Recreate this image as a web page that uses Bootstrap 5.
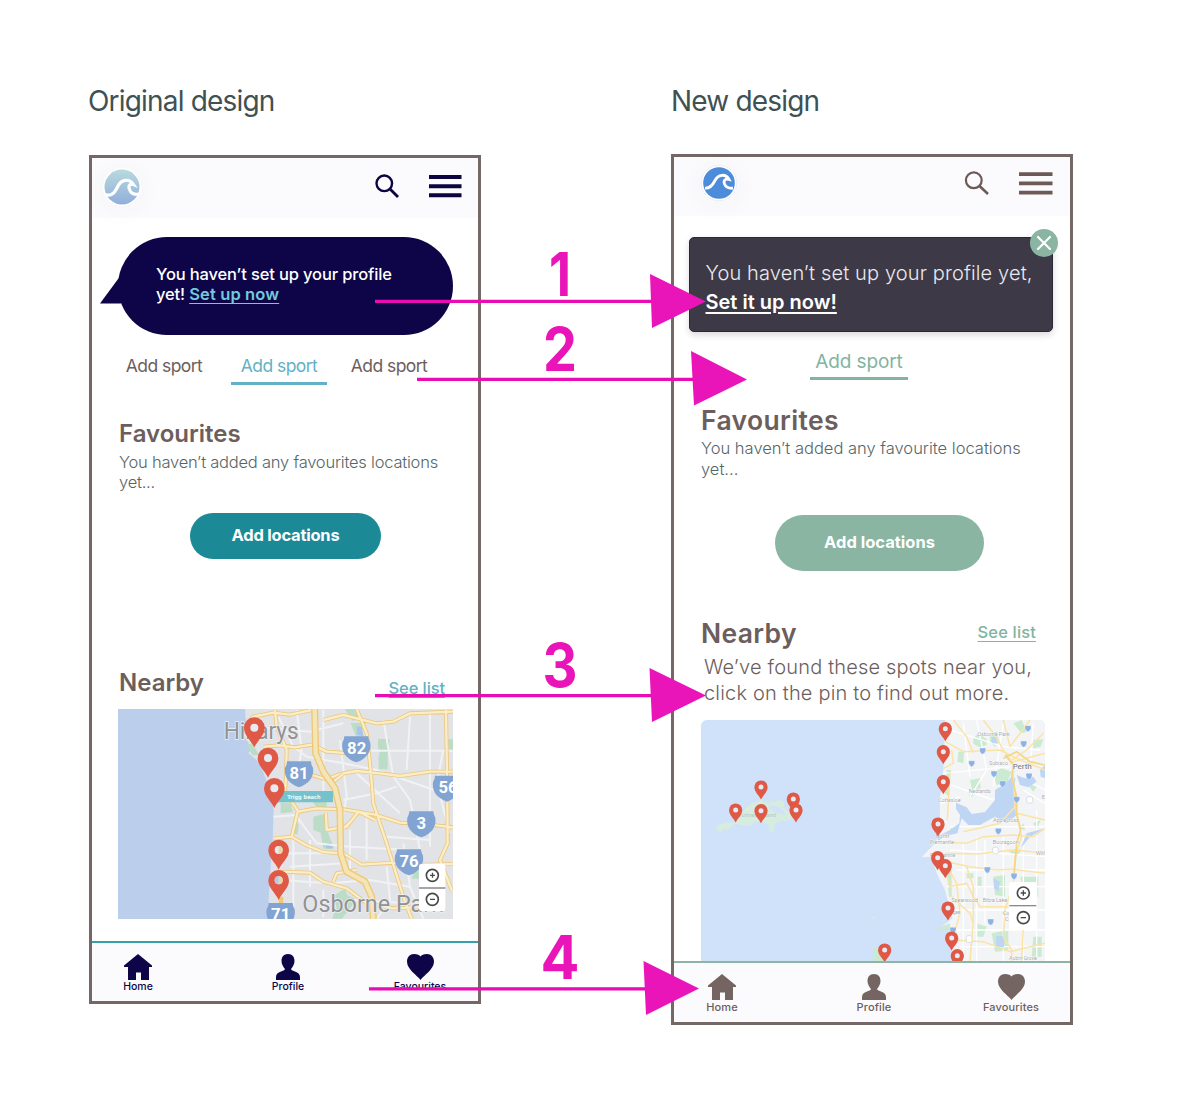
<!DOCTYPE html>
<html lang="en">
<head>
<meta charset="utf-8">
<meta name="viewport" content="width=device-width, initial-scale=1">
<title>Original and new design</title>
<link rel="stylesheet" href="https://cdn.jsdelivr.net/npm/bootstrap@5.3.0/dist/css/bootstrap.min.css">
<style>
body{font-family:Inter,"Liberation Sans",sans-serif;background:#fff;color:#6c5e5c}
.board{width:1200px;height:1093px;overflow:hidden}
.col-old{width:392px;margin-left:89px;padding-top:82px}
.col-new{width:402px;margin-left:190px;padding-top:82px}
.board-title{font-size:28px;line-height:38px;font-weight:400;color:#3f5153;letter-spacing:-.82px;margin:0 0 0 -1px;white-space:nowrap}
.phone{border:3px solid #746765;background:#fff}
.col-old .phone{height:849px;margin-top:35px}
.col-new .phone{height:871px;margin-top:34px}
.topbar{background:#fbfafd}
.col-old .topbar{height:60px;padding:0 16px 3px 11px}
.col-new .topbar{height:59px;padding:0 17px 7px 26px}
.phone svg{display:block;flex:none}
.logo-halo{border-radius:50%;box-shadow:0 4px 28px rgba(60,60,80,.045)}
.bubble{background:#0e0549;color:#fff;width:335px;height:98px;margin:19px 0 0 26px;border-radius:49px;padding:27px 0 0 38px;font-size:16.5px;line-height:20px;font-weight:500;white-space:nowrap;letter-spacing:-.14px}
.bubble a{color:#73c9d9;font-weight:600;text-underline-offset:3px;letter-spacing:.12px}
.bubble-tail{left:-18px;top:35px}
.sport{width:96px;height:30px;border-bottom:3px solid transparent;font-size:17.5px;line-height:22px;text-align:center;white-space:nowrap;letter-spacing:-.55px}
.col-old .sport.current{color:#62b1c5;border-color:#62b1c5}
.head{font-size:24px;line-height:30px;font-weight:600;margin:0;color:#6c5e5c}
.muted-copy{font-size:16.5px;line-height:20px;color:#566667;margin:0;white-space:nowrap;font-weight:350;letter-spacing:-.22px}
.pill{display:flex;align-items:center;justify-content:center;border:0;border-radius:50px;color:#fff;font-weight:700;font-size:16.5px;white-space:nowrap;padding:0}
.see{font-size:16.5px;line-height:20px;text-underline-offset:3px;white-space:nowrap}
.col-old .pill{background:#1b8996;width:191px;height:46px;margin:21px 0 0 98px;letter-spacing:-.23px;padding-bottom:1px}
.col-old .see{color:#62b1c5;font-weight:500;letter-spacing:-.1px}
.tabbar{background:#fbfafd}
.tabbar>div{width:60px;font-size:10.5px;line-height:12px;font-weight:500;white-space:nowrap}
.col-old .tabbar{border-top:2px solid #35a0aa;height:60px;color:#0e0549;padding:11px 0 0 16px}
.col-new .tabbar{border-top:2px solid #8cb5a5;height:61px;padding:10px 0 0 18px}
.col-new .tabbar>div{font-size:11px;letter-spacing:.12px}
.alert-card{background:#3d3946;color:#ebe9ee;width:364px;height:95px;margin:21px 0 0 15px;padding:21px 0 0 15.5px;border-radius:5px;border:1px solid #2b2838;font-size:20px;line-height:29px;font-weight:300;white-space:nowrap;letter-spacing:.14px;box-shadow:0 3px 7px rgba(0,0,0,.15)}
.alert-card a{color:#fff;font-weight:600;text-underline-offset:3px;letter-spacing:0;text-decoration-thickness:1.5px}
.dismiss{left:340px;top:-9px}
.col-new .sport{width:98px;color:#82b4a0;border-color:#82b4a0;font-size:19px;line-height:26px;height:31px;letter-spacing:-.12px}
.col-new .head{font-size:26.5px;line-height:28px;letter-spacing:.35px}
.col-new .muted-copy{letter-spacing:0;line-height:20.5px}
.col-new .pill{background:#8ab5a3;width:209px;height:56px;margin:36px 0 0 101px;padding-bottom:1px}
.col-new .see{color:#82b4a0;font-weight:500;letter-spacing:.15px}
.spots{font-size:20px;line-height:26px;font-weight:300;margin:7px 0 0 30px;white-space:nowrap;letter-spacing:.18px}
.map-new{margin:14px 0 0 27px;border-radius:6px 6px 0 0}
.marks{left:0;top:0;pointer-events:none}
</style>
</head>
<body>
<svg width="0" height="0" class="position-absolute">
 <defs>
  <g id="pin"><path d="M0 59C-10 37-31 24-31 0A31 31 0 0 1 31 0C31 24 10 37 0 59Z" fill="#df5946"/></g>
  <g id="shield"><path d="M-36-37H36Q36-27 42-18C46 8 32 30 0 41C-32 30-46 8-42-18Q-36-27-36-37Z" fill="#82a4d2"/></g>
  <path id="mini" d="M-9-8H9V0Q8 7 0 11Q-8 7-9 0Z" fill="#8db2e4" stroke="#fff" stroke-width="1"/>
  <g id="house"><path d="M14 0L28 11.5V13H25V26H17V18.500H12V26H4V13H0V11.500Z"/></g>
  <g id="person"><path d="M12 0C16.500 0 18.500 3 18.500 7C18.500 10.500 16.500 13 15 15C15 17.500 24 17 24 23V26H0V23C0 17 9 17.500 9 15C7.500 13 5.500 10.500 5.500 7C5.500 3 7.500 0 12 0Z"/></g>
  <g id="heart"><path d="M13.500 26C10 21 0 15.500 0 7.500C0 3 3 0 7 0C10.500 0 12.500 1 13.500 2.500C14.500 1 16.500 0 20 0C24 0 27 3 27 7.500C27 15.500 17 21 13.500 26Z"/></g>
  <linearGradient id="lg" x1="0" y1="0" x2="0" y2="1"><stop offset="0" stop-color="#b8dade"/><stop offset="1" stop-color="#91aedb"/></linearGradient>
 </defs>
</svg>
<main class="board position-relative d-flex align-items-start">
 <section class="col-old">
  <h1 class="board-title">Original design</h1>
  <div class="phone d-flex flex-column">
   <header class="topbar d-flex align-items-center">
    <svg class="logo-halo me-auto" width="38" height="38" viewBox="0 0 38 38"><circle cx="19" cy="19" r="19" fill="#fff"/><circle cx="19" cy="19" r="17.500" fill="url(#lg)"/><path d="M2 26.500C9 29 12 24 15 18C18 12 26 9.500 30.500 16.500C27 15 25 17.500 26.500 21.500C28 25.500 31 27 36 26" fill="none" stroke="#fff" stroke-width="3.200"/></svg>
    <svg width="25" height="25" viewBox="0 0 25 25" fill="none" stroke="#0c0540"><circle cx="9.300" cy="9.300" r="7.800" stroke-width="2.400"/><path d="M15 15L23 23" stroke-width="2.800"/></svg>
    <svg style="margin-left:29px" width="33" height="23" viewBox="0 0 33 23" fill="#0c0540"><path d="M0 0H32.500V4H0ZM0 9.200H32.500V13.200H0ZM0 18.200H32.500V22.200H0Z"/></svg>
   </header>
   <div class="bubble position-relative"><svg class="bubble-tail position-absolute" width="24" height="32" viewBox="0 0 24 32"><path d="M0 31.500L21 3V31.500Z" fill="#0e0549"/></svg><span>You haven’t set up your profile</span><br>yet! <a href="#">Set up now</a></div>
   <nav class="d-flex" style="margin:20px 0 0 24px"><div class="sport">Add sport</div><div class="sport current" style="margin:0 14px 0 19px">Add sport</div><div class="sport">Add sport</div></nav>
   <h2 class="head" style="margin:34px 0 0 27px">Favourites</h2>
   <p class="muted-copy" style="margin:3px 0 0 27px">You haven’t added any favourites locations<br>yet...</p>
   <button class="pill">Add locations</button>
   <div class="d-flex justify-content-between" style="margin:109px 33px 0 27px"><h2 class="head">Nearby</h2><a class="see" style="margin-top:10px" href="#">See list</a></div>
   <svg style="margin:11px 0 0 26px" width="335" height="210" viewBox="24 27 1005 630">
    <path fill="#bbceec" d="M24 27H1029V657H24Z"/>
    <path fill="#e2e3e7" d="M405 27H1029V657H485L476 600L482 500L488 420L491 330L480 270L455 205L440 180L415 160L425 145L400 105L408 70Z"/>
    <g fill="#bbdcc6"><path d="M722 70L754 68L765 130L738 110ZM804 117H838V150H833V208H806V170L811 148H804ZM512 308L542 310L548 336L512 340ZM610 350L650 340L655 400L672 446H640L632 398L610 390ZM552 352L566 374L563 403L548 402ZM666 590L704 566L712 586L740 598L696 656H666L680 620ZM600 296H650V322H620ZM1014 118H1029V150H1017ZM1010 390L1022 388L1018 430ZM704 27H740L750 58L728 62ZM910 516L925 500L928 536H906ZM408 135L426 130L448 166H428Z"/></g>
    <path fill="#a9c4ee" d="M740 78L755 82L760 108L742 104ZM645 430L665 428L668 445L650 446Z"/>
    <g fill="none" stroke="#f1f2f4" stroke-width="6">
     <path d="M505 50L550 140L590 170L700 190L800 210L1029 290M430 80L600 95L700 70M560 30L575 150L560 230M640 30L640 300M690 120L710 290L690 390M780 152H1029M820 60L850 230L900 300L930 450M900 50L890 210M960 40L960 440M860 260L800 280L700 300M560 350L620 430L720 440L900 450M550 400V650M600 420V560M720 390V520M770 350V480M495 460H660M510 540L660 550L780 540L900 560M640 570L640 650M830 410L960 420M830 500L840 600L800 657M880 430L900 560L940 657M490 350L560 345M540 500L700 490M730 600L900 610M1000 150L980 250L1020 400M740 220L870 340"/></g>
    <g fill="none" stroke-linejoin="round">
     <g stroke="#ecc878" stroke-width="12"><path d="M410 70L430 50L490 38L540 44L605 30M495 30L500 80L530 150L528 230L525 275L565 335L620 325L700 328L795 344L870 368L960 374L1029 382M460 140L510 136L555 142L605 134L650 155L720 160M640 60L700 45L800 70L850 65L900 40L1029 35M740 27L770 100L782 210L790 310L830 430L880 590L905 657M605 225L650 238L690 222L740 213L810 220L870 228L960 215L1029 215M700 385L722 365L745 335L795 360M563 335L545 410L490 416M545 410L590 436L640 456L700 460L755 494L850 488L935 495L1029 492M648 338L650 390L710 380L745 335M510 515L600 518L640 545L710 565L770 610L850 625L960 620M1008 30L1012 290L1013 430L990 480L1025 570M670 545L680 520L740 510"/></g>
     <g stroke="#faedc8" stroke-width="7"><path d="M410 70L430 50L490 38L540 44L605 30M495 30L500 80L530 150L528 230L525 275L565 335L620 325L700 328L795 344L870 368L960 374L1029 382M460 140L510 136L555 142L605 134L650 155L720 160M640 60L700 45L800 70L850 65L900 40L1029 35M740 27L770 100L782 210L790 310L830 430L880 590L905 657M605 225L650 238L690 222L740 213L810 220L870 228L960 215L1029 215M700 385L722 365L745 335L795 360M563 335L545 410L490 416M545 410L590 436L640 456L700 460L755 494L850 488L935 495L1029 492M648 338L650 390L710 380L745 335M510 515L600 518L640 545L710 565L770 610L850 625L960 620M1008 30L1012 290L1013 430L990 480L1025 570M670 545L680 520L740 510"/></g>
     <path d="M670 245L700 222" stroke="#ecc878" stroke-width="12"/><path d="M670 245L700 222" stroke="#faedc8" stroke-width="7"/>
     <path d="M614 27L617 160L640 215L675 265L690 330L692 460L710 515L765 545L785 590L790 657" stroke="#ecc878" stroke-width="21"/><path d="M614 27L617 160L640 215L675 265L690 330L692 460L710 515L765 545L785 590L790 657" stroke="#f5e4b4" stroke-width="13"/>
     <path d="M513 590V615" stroke="#ecc878" stroke-width="14"/>
    </g>
    <g font-family="Roboto,sans-serif" fill="#919294" stroke="#eceef2" stroke-width="5" paint-order="stroke" font-size="70"><text x="341" y="117" textLength="225" lengthAdjust="spacingAndGlyphs">Hillarys</text><text x="577" y="636" textLength="422" lengthAdjust="spacingAndGlyphs">Osborne Park</text></g>
    <g font-family="Roboto,sans-serif" font-weight="700" font-size="50" fill="#fff" text-anchor="middle">
     <use href="#shield" x="739" y="146"/><text x="740" y="161">82</text>
     <use href="#shield" x="567" y="221"/><text x="567" y="236">81</text>
     <use href="#shield" x="1011" y="264"/><text x="1014" y="279">56</text>
     <use href="#shield" x="934" y="371"/><text x="934" y="386">3</text>
     <use href="#shield" x="897" y="485"/><text x="897" y="500">76</text>
     <use href="#shield" x="512" y="646"/><text x="512" y="659">71</text>
    </g>
    <path fill="#75c1cc" d="M500 273H669V307H500Z"/><text x="532" y="296" font-size="17" font-family="'DejaVu Sans',sans-serif" font-weight="700" fill="#e9fafa" textLength="100" lengthAdjust="spacingAndGlyphs">Trigg beach</text>
    <use href="#pin" x="433" y="83"/><use href="#pin" x="474" y="174"/><use href="#pin" x="493" y="265"/><use href="#pin" x="506" y="450"/><use href="#pin" x="506" y="541"/>
    <g fill="#e6ebf2"><circle cx="433" cy="83" r="12"/><circle cx="474" cy="174" r="12"/><circle cx="493" cy="265" r="12"/><circle cx="506" cy="450" r="12"/><circle cx="506" cy="541" r="12"/></g>
    <path d="M506 438A12 12 0 0 1 506 462Z" fill="#e8d9a4"/><path d="M506 529A12 12 0 0 1 506 553Z" fill="#e8d9a4"/><path d="M506 529A12 12 0 0 0 506 553Z" fill="#b4c8ea"/>
    <rect x="927" y="491" width="79" height="143" rx="9" fill="#fff"/><path d="M927 564H1006" stroke="#949494" stroke-width="5"/>
    <g fill="none" stroke="#494949" stroke-width="5"><circle cx="967" cy="526" r="18"/><circle cx="967" cy="598" r="18"/><path d="M960 526H975M967.500 518.500V533.500M960 598H975" stroke-width="4"/></g>
   </svg>
   <footer class="tabbar d-flex mt-auto">
    <div class="d-flex flex-column align-items-center"><svg width="28" height="27" fill="#0e0549"><use href="#house"/></svg><span>Home</span></div>
    <div class="d-flex flex-column align-items-center" style="margin-left:90px"><svg width="24" height="27" fill="#0e0549"><use href="#person"/></svg><span>Profile</span></div>
    <div class="d-flex flex-column align-items-center" style="margin-left:72px"><svg width="27" height="27" fill="#0e0549"><use href="#heart"/></svg><span>Favourites</span></div>
   </footer>
  </div>
 </section>

 <section class="col-new">
  <h1 class="board-title" style="margin-left:0">New design</h1>
  <div class="phone d-flex flex-column">
   <header class="topbar d-flex align-items-center">
    <svg class="logo-halo me-auto" width="38" height="38" viewBox="0 0 38 38"><circle cx="19" cy="19" r="17.800" fill="#fff" stroke="#dde6f6" stroke-width=".7"/><circle cx="19" cy="19" r="15.800" fill="#4d8bdb"/><path d="M5 24.200C10 24.500 12.500 21.500 15 16.500C18 10.500 25.500 9 29 15.500C25.500 14.500 23 16.500 24.500 20C26 23.800 29 24.500 33 24.200" fill="none" stroke="#fff" stroke-width="2.800"/></svg>
    <svg width="25" height="25" viewBox="0 0 25 25" fill="none" stroke="#6c5a57"><circle cx="9.800" cy="9.300" r="7.900" stroke-width="2.200"/><path d="M15.500 15L24 23" stroke-width="2.500"/></svg>
    <svg style="margin-left:30px" width="34" height="23" viewBox="0 0 34 23" fill="#6c5a57"><path d="M0 .3H33.500V4H0ZM0 9.600H33.500V13.300H0ZM0 18.700H33.500V22.400H0Z"/></svg>
   </header>
   <div class="alert-card position-relative"><span>You haven’t set up your profile yet,</span><br><a href="#">Set it up now!</a>
    <svg class="dismiss position-absolute" width="28" height="28" viewBox="0 0 28 28"><circle cx="14" cy="14" r="14" fill="#8ab5a3"/><path d="M8 8L20 20M20 8L8 20" stroke="#fff" stroke-width="2.200" stroke-linecap="round"/></svg></div>
   <div class="sport" style="margin:17px 0 0 136px">Add sport</div>
   <h2 class="head" style="margin:26px 0 0 27px">Favourites</h2>
   <p class="muted-copy" style="margin:4px 0 0 27px">You haven’t added any favourite locations<br>yet...</p>
   <button class="pill">Add locations</button>
   <div class="d-flex justify-content-between" style="margin:48px 34px 0 27px"><h2 class="head">Nearby</h2><a class="see" style="margin-top:3px" href="#">See list</a></div>
   <p class="spots">We’ve found these spots near you,<br>click on the pin to find out more.</p>
   <svg class="map-new" width="344" height="241" viewBox="-507 30 1032 723">
    <path fill="#d0e1fa" d="M-507 30H525V753H-507Z"/>
    <path fill="#f3f4f6" d="M226 30H525V753H262L245 730L250 660L215 650L247 625L225 540L205 500L190 462L185 440L155 442L190 405L205 380L210 350L210 270L220 180Z"/>
    <g fill="#caead1"><path d="M310 85L325 70L350 88L350 105L330 112L310 102ZM360 70L380 65L388 95L375 110L360 95ZM230 180L242 180L238 260L225 250ZM365 190L395 175L425 185L410 220L380 225ZM265 125L282 124L280 160L262 155ZM300 210L330 205L332 235L306 238ZM430 40L455 30L470 65L455 70ZM490 90L520 88L512 110L490 115ZM365 670L415 660V722L375 725ZM490 680H515V740H485ZM370 500L405 495V560L375 555ZM290 490H310V505H290ZM240 355L262 350L255 370ZM410 420L455 418L440 440ZM230 480H245V560H237ZM198 656L240 640V660ZM450 500H505V560H470ZM430 600H470V635H430ZM250 735H280V753H250ZM320 500H335V530H320ZM490 340L512 330L500 360ZM295 255L312 250L306 262ZM470 220L500 230L490 245ZM445 355L460 340L465 360ZM320 640L350 650L340 680H320ZM12 715L35 708L48 753H10Z"/></g>
    <g fill="none" stroke="#fff" stroke-width="4"><path d="M240 60L400 110L510 120M280 40L300 200M320 30L350 180L300 260M400 40L370 230M490 40L480 180M220 190L420 170M230 220L370 270M240 350L525 350M240 420L525 440M260 480H525M230 530H525M240 600H525M260 660H525M270 710H525M280 400V753M320 380V753M345 390V640M400 380V753M460 380V753M500 300V753M210 280L270 260M460 240L525 280M450 200L525 240"/></g>
    <path fill="#bfd5f4" d="M258 278L290 292L305 312L345 306L375 270L375 240L405 222L425 200L436 205L432 240L442 265L440 315L410 340L375 320L330 345L295 345L275 325L262 370L225 378L205 392L200 380L240 360L268 340L270 315L258 296ZM440 195L465 205L490 200L500 215L475 232L450 225ZM525 165L510 180L512 200L525 205ZM525 355L480 380L452 415L470 370ZM370 505L390 515L385 545L372 535ZM378 678H402V712H378ZM365 80H380V100H365Z"/>
    <g fill="none" stroke="#fbe3a5" stroke-width="4.500" stroke-linejoin="round"><path d="M226 95L280 125L390 120L440 145L525 180M250 30L290 80L310 130M340 30L375 75L400 120L430 160L430 200L435 290L455 380L435 440L430 520L405 600L400 680L425 720V753M425 150L470 120L520 70M400 30L420 110L480 30M430 155L525 130M220 175L250 160L245 120M240 180L232 330M205 395L290 400L340 380L430 375L490 380L525 355M225 430L320 432L430 420L525 430M205 450L300 470L380 480L430 478L525 490M230 490L240 530L290 520L310 560L330 590L415 590M290 470L310 530V630L300 753M245 560L300 610L310 640M250 690L340 695L420 725L525 700M215 440L260 520L270 610L250 680M450 530L500 600L460 650L455 753M440 310L525 330M435 290L390 340L280 365"/></g>
    <g fill="none" stroke="#f6d585" stroke-width="5"><path d="M405 135L430 165L425 200L440 260V310L452 360L440 400L432 500"/><path d="M400 145L440 125L480 155L525 165"/></g>
    <use href="#mini" x="474" y="55"/><use href="#mini" x="461" y="101"/><use href="#mini" x="338" y="122"/><use href="#mini" x="305" y="160"/><use href="#mini" x="372" y="191"/><use href="#mini" x="398" y="221"/><use href="#mini" x="477" y="198"/><use href="#mini" x="440" y="268"/><use href="#mini" x="385" y="363"/><use href="#mini" x="352" y="479"/><use href="#mini" x="432" y="498"/><use href="#mini" x="362" y="635"/><use href="#mini" x="249" y="660"/>
    <g fill="#fff" stroke="#cfd2d6" stroke-width="2"><rect x="470" y="260" width="18" height="19" rx="5"/><rect x="368" y="412" width="17" height="19" rx="5"/><rect x="289" y="677" width="17" height="20" rx="5"/></g>
    <g font-family="Roboto,sans-serif" fill="#a5a8ad" stroke="#fff" stroke-width="2" paint-order="stroke" font-size="17"><text x="322" y="77" textLength="97">Osborne Park</text><text x="357" y="164" textLength="57">Subiaco</text><text x="296" y="249" textLength="66">Nedlands</text><text x="204" y="276" textLength="68">Cottesloe</text><text x="369" y="335" textLength="78">Applecross</text><text x="368" y="401" textLength="78">Booragoon</text><text x="197" y="384" textLength="40">North</text><text x="180" y="402" textLength="72">Fremantle</text><text x="180" y="441" textLength="76">Fremantle</text><text x="244" y="576" textLength="80">Spearwood</text><text x="338" y="576" textLength="74">Bibra Lake</text><text x="225" y="612" textLength="46">Coogee</text><text x="417" y="750" textLength="84">Aubin Grove</text><text x="497" y="434">Will</text><text x="398" y="616">Cockburn</text><text x="405" y="634">Central</text><text x="515" y="267">E</text><text x="428" y="177" font-size="24" font-weight="500" fill="#85888d" textLength="57">Perth</text></g>
    <g transform="translate(-540 0)"><path fill="#d6ecdf" d="M75 357L88 343L110 338L125 340L150 310L185 280L205 274L215 268L222 276L243 280L240 270L255 275L270 269L283 278L280 290L292 303L305 308V330L270 333L255 340L250 365L240 366L235 345L215 332L195 335L180 348L150 345L135 340L120 356L100 358L93 367Z"/><path fill="#d0e1fa" d="M238 286L265 290L280 302L288 315L262 309L250 303L240 300Z"/><text x="144" y="320" font-family="Roboto,sans-serif" font-size="17" fill="#b9c6cf" textLength="114">Rottnest Island</text><circle cx="552" cy="622" r="4" fill="#d6ecdf"/></g>
    <g id="pins-new"></g>
    <rect x="417" y="516" width="84" height="144" rx="9" fill="#fff"/><path d="M418 587H499" stroke="#8a8a8a" stroke-width="4"/>
    <g fill="none" stroke="#494949" stroke-width="5"><circle cx="460" cy="549" r="18"/><circle cx="460" cy="623" r="18"/><path d="M452 549H468M460 541V557M452 623H468" stroke-width="4"/></g>
   </svg>
   <footer class="tabbar d-flex">
    <div class="d-flex flex-column align-items-center"><svg width="28" height="28" viewBox="0 -1 28 28" fill="#746562"><use href="#house"/></svg><span>Home</span></div>
    <div class="d-flex flex-column align-items-center" style="margin-left:92px"><svg width="24" height="28" viewBox="0 -1 24 28" fill="#746562"><use href="#person"/></svg><span>Profile</span></div>
    <div class="d-flex flex-column align-items-center" style="margin-left:77px"><svg width="27" height="28" viewBox="0 -1 27 28" fill="#746562"><use href="#heart"/></svg><span>Favourites</span></div>
   </footer>
  </div>
 </section>

 <svg class="marks position-absolute" width="1200" height="1093" viewBox="0 0 1200 1093" fill="#e915b9">
  <path d="M375 299.800H655V303H375ZM417 377.800H695V381H417ZM375 694H655V697.200H375ZM369 987.200H648V990.400H369Z" fill="#e90bb4"/>
  <path d="M650 274L706 301.500L652 328ZM691 351L747 379.500L694 405.500ZM649.500 668L706 695.500L652 722ZM643.500 961L699 988.500L646 1015Z"/>
  <g font-family="Inter,sans-serif" font-weight="700" font-size="60"><text x="549" y="295.500" textLength="22" lengthAdjust="spacingAndGlyphs">1</text><text x="543" y="371" textLength="34" lengthAdjust="spacingAndGlyphs">2</text><text x="542.500" y="687" textLength="35" lengthAdjust="spacingAndGlyphs">3</text><text x="540.500" y="979" textLength="39" lengthAdjust="spacingAndGlyphs">4</text></g>
 </svg>
</main>
<script src="https://cdn.jsdelivr.net/npm/bootstrap@5.3.0/dist/js/bootstrap.bundle.min.js"></script>
<script>
// Surf spots on the coastal map: head centre of each pin
const spots=[[226,56],[220,125],[220,215],[204,342],[203,443],[226,467],[234,594],[245,684],[262,737],[44,720],[-327,231],[-230,267],[-403,300],[-327,302],[-222,300]];
document.getElementById('pins-new').innerHTML=spots.map(([x,y])=>`<g transform="translate(${x} ${y})"><use href="#pin" transform="scale(.64)"/><circle r="7.500" fill="#e4ebf5"/></g>`).join('');
</script>
</body>
</html>
